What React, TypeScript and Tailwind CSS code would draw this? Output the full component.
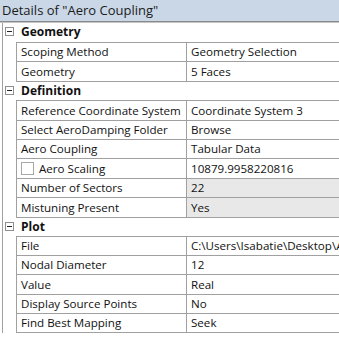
import React from "react";

type Row =
  | { kind: "group"; name: string; h: string }
  | { kind: "prop"; name: string; value: string; h: string; check?: boolean; shaded?: boolean };

const rows: Row[] = [
  { kind: "group", name: "Geometry", h: "h-[20px]" },
  { kind: "prop", name: "Scoping Method", value: "Geometry Selection", h: "h-[19px]" },
  { kind: "prop", name: "Geometry", value: "5 Faces", h: "h-[20px]" },
  { kind: "group", name: "Definition", h: "h-[19px]" },
  { kind: "prop", name: "Reference Coordinate System", value: "Coordinate System 3", h: "h-[20px]" },
  { kind: "prop", name: "Select AeroDamping Folder", value: "Browse", h: "h-[19px]" },
  { kind: "prop", name: "Aero Coupling", value: "Tabular Data", h: "h-[19px]" },
  { kind: "prop", name: "Aero Scaling", value: "10879.9958220816", h: "h-[20px]", check: true },
  { kind: "prop", name: "Number of Sectors", value: "22", h: "h-[19px]", shaded: true },
  { kind: "prop", name: "Mistuning Present", value: "Yes", h: "h-[20px]", shaded: true },
  { kind: "group", name: "Plot", h: "h-[19px]" },
  { kind: "prop", name: "File", value: "C:\\Users\\Isabatie\\Desktop\\Aero", h: "h-[19px]" },
  { kind: "prop", name: "Nodal Diameter", value: "12", h: "h-[19px]" },
  { kind: "prop", name: "Value", value: "Real", h: "h-[20px]" },
  { kind: "prop", name: "Display Source Points", value: "No", h: "h-[19px]" },
  { kind: "prop", name: "Find Best Mapping", value: "Seek", h: "h-[19px]" },
];

const MinusBox = () => (
  <div className="w-[9px] h-[9px] border border-[#8e8e8e] bg-white flex items-center justify-center">
    <div className="w-[5px] h-[1px] bg-[#222]" />
  </div>
);

export default function App() {
  return (
    <div
      className="w-[339px] h-[340px] bg-white overflow-hidden text-[#111] text-[11.6px]"
      style={{ fontFamily: '"Open Sans", "Liberation Sans", sans-serif' }}
    >
      <div className="h-[21px] bg-[#cad7e7] pl-[2px] text-[13px] leading-[21px] text-[#1b1b1b] whitespace-nowrap">
        Details of "Aero Coupling"
      </div>
      <div className="h-[1px] bg-[#8a8a8a]" />
      <div className="h-[1px] bg-[#c4c4c4]" />
      <div className="ml-[2px] border-l border-[#a0a0a0] w-[400px]">
        {rows.map((r, i) =>
          r.kind === "group" ? (
            <div key={i} className={`flex ${r.h}`}>
              <div className="w-[13px] shrink-0 flex items-start pt-[4px] pl-[2px]">
                <MinusBox />
              </div>
              <div className="flex-1 border-b border-[#a0a0a0] pl-[5px] font-bold text-[12px] leading-[18px] whitespace-nowrap">
                {r.name}
              </div>
            </div>
          ) : (
            <div key={i} className={`flex ${r.h}`}>
              <div className="w-[13px] shrink-0" />
              <div className="w-[170px] shrink-0 border-l border-b border-[#a0a0a0] pl-[4px] flex items-center gap-[5px] whitespace-nowrap">
                {r.check && <div className="w-[13px] h-[13px] border border-[#a8a8a8] bg-white" />}
                <span>{r.name}</span>
              </div>
              <div
                className={`flex-1 border-l border-b border-[#a0a0a0] pl-[4px] flex items-center whitespace-nowrap ${
                  r.shaded ? "bg-[#e8e8e8]" : "bg-white"
                }`}
              >
                {r.value}
              </div>
            </div>
          )
        )}
      </div>
    </div>
  );
}
